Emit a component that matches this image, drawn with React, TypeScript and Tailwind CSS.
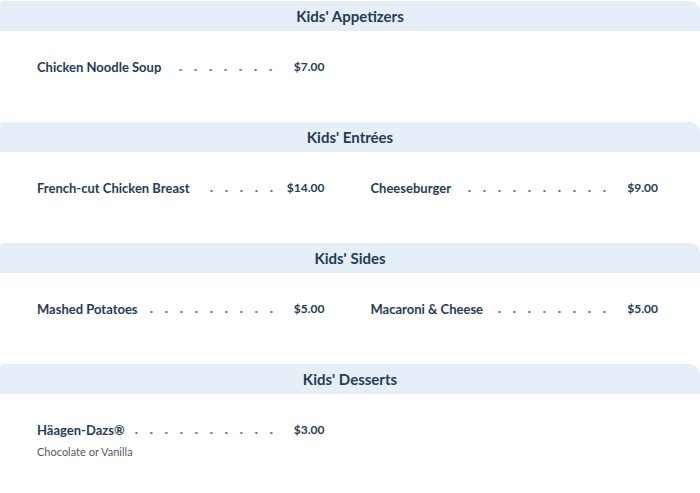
import React from 'react'

type Item = { name: string; price: string; desc?: string }
type Section = { title: string; items: Item[] }

const sections: Section[] = [
  { title: "Kids' Appetizers", items: [{ name: 'Chicken Noodle Soup', price: '$7.00' }] },
  {
    title: "Kids' Entrées",
    items: [
      { name: 'French-cut Chicken Breast', price: '$14.00' },
      { name: 'Cheeseburger', price: '$9.00' },
    ],
  },
  {
    title: "Kids' Sides",
    items: [
      { name: 'Mashed Potatoes', price: '$5.00' },
      { name: 'Macaroni & Cheese', price: '$5.00' },
    ],
  },
  {
    title: "Kids' Desserts",
    items: [{ name: 'Häagen-Dazs®', price: '$3.00', desc: 'Chocolate or Vanilla' }],
  },
]

const MenuItem = ({ item }: { item: Item }) => (
  <div className="flex flex-col">
    <div className="flex items-center h-4">
      <span className="text-[13px] font-bold text-[#253b56] whitespace-nowrap leading-4">{item.name}</span>
      {/* dotted leader */}
      <span className="flex-1 h-[4px] ml-[10px] mr-[-4px] mt-[5px] bg-[radial-gradient(circle,#6b7480_0.9px,transparent_1.4px)] bg-[length:15px_4px] bg-repeat-x bg-right"></span>
      <span className="w-[50px] text-right text-[12px] font-bold text-[#253b56] leading-4">{item.price}</span>
    </div>
    {item.desc && (
      <p className="mt-[6px] text-[11px] text-[#555b63] leading-4">{item.desc}</p>
    )}
  </div>
)

export default function App() {
  return (
    <div className="w-[700px] h-[493px] overflow-hidden bg-white pt-px font-['Lato',sans-serif]">
      {sections.map((section, i) => (
        <div key={i}>
          <div className="h-[30px] bg-[#e6eef8] rounded-tl-[4px] rounded-tr-[10px] flex items-center justify-center">
            <h2 className="text-[15px] font-bold text-[#253b56]">{section.title}</h2>
          </div>
          <div className="pl-[37px] pr-[42px] pt-[28px] pb-[47px] grid grid-cols-2 gap-x-[46px]">
            {section.items.map((item, j) => (
              <MenuItem key={j} item={item} />
            ))}
          </div>
        </div>
      ))}
    </div>
  )
}
